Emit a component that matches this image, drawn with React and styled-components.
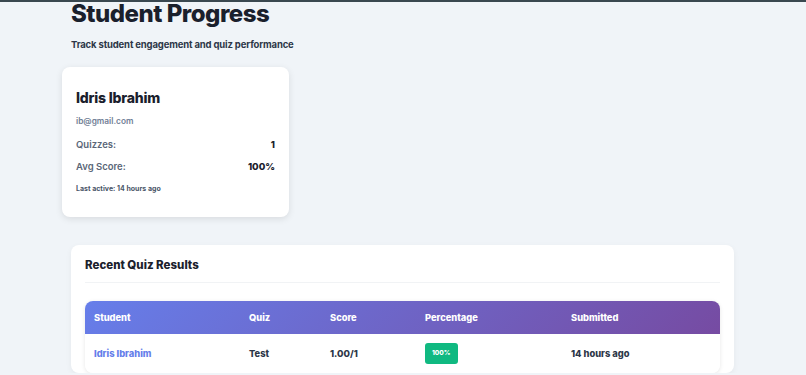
import React from "react";
import styled, { createGlobalStyle } from "styled-components";

const Global = createGlobalStyle`
  html, body { margin: 0; padding: 0; }
  body {
    background: #f0f4f8;
    font-family: Inter, "Noto Sans", "Liberation Sans", sans-serif;
    color: #1a202c;
    overflow: hidden;
  }
`;

const TopBar = styled.div`
  height: 2px;
  background: #3a4850;
`;

const Page = styled.main`
  display: flex;
  flex-direction: column;
  padding: 0 72px 0 62px;
`;

const Header = styled.header`
  padding-left: 9px;
`;

const Title = styled.h1`
  margin: 0;
  font-size: 24px;
  line-height: 1;
  font-weight: 800;
  color: #1a202c;
  letter-spacing: -0.5px;
`;

const Subtitle = styled.p`
  margin: 13px 0 0;
  font-size: 9.5px;
  line-height: 12px;
  font-weight: 700;
  color: #2d3748;
  letter-spacing: -0.15px;
`;

const Card = styled.section`
  margin-top: 16px;
  width: 227px;
  box-sizing: border-box;
  height: 150px;
  padding: 22px 14px 0;
  background: #fff;
  border-radius: 8px;
  box-shadow: 0 2px 7px rgba(0, 0, 0, 0.1);
`;

const Name = styled.h3`
  margin: 0;
  font-size: 14px;
  line-height: 18px;
  font-weight: 800;
  color: #1a202c;
  letter-spacing: -0.2px;
`;

const Email = styled.div`
  margin-top: 8px;
  font-size: 8.3px;
  line-height: 12px;
  font-weight: 600;
  color: #718096;
`;

const StatRow = styled.div`
  display: flex;
  justify-content: space-between;
  align-items: center;
  margin-top: ${(p) => p.$gap}px;
  font-size: 9.5px;
  line-height: 14px;
`;

const StatLabel = styled.span`
  font-weight: 600;
  color: #5a6678;
`;

const StatValue = styled.span`
  font-weight: 800;
  color: #1a202c;
`;

const LastActive = styled.div`
  margin-top: 10px;
  font-size: 7px;
  line-height: 10px;
  font-weight: 700;
  color: #4a5568;
`;

const Results = styled.section`
  margin: 28px 0 0 9px;
  padding: 13px 14px 0;
  background: #fff;
  border-radius: 8px;
  box-shadow: 0 2px 6px rgba(0, 0, 0, 0.05);
`;

const ResultsTitle = styled.h2`
  margin: 0;
  padding-bottom: 10px;
  font-size: 11.5px;
  line-height: 14px;
  font-weight: 800;
  color: #1a202c;
  border-bottom: 1px solid #f1f3f5;
`;

const TableWrap = styled.div`
  margin-top: 18px;
  border-radius: 8px;
  overflow: hidden;
  box-shadow: 0 1px 4px rgba(0, 0, 0, 0.1);
`;

const Table = styled.table`
  width: 100%;
  border-collapse: collapse;
  table-layout: fixed;
`;

const HeadRow = styled.tr`
  background: linear-gradient(135deg, #667eea 0%, #764ba2 100%);
`;

const Th = styled.th`
  height: 33px;
  padding: 0 9px;
  text-align: left;
  font-size: 9.3px;
  font-weight: 800;
  color: #fff;
`;

const Td = styled.td`
  height: 39px;
  padding: 0 9px;
  font-size: 9.3px;
  font-weight: 800;
  color: ${(p) => (p.$accent ? "#667eea" : "#2d3748")};
  background: #fff;
`;

const Badge = styled.span`
  display: inline-block;
  padding: 6px 7px;
  border-radius: 3px;
  background: #10b981;
  color: #fff;
  font-size: 6.5px;
  line-height: 9px;
  font-weight: 800;
`;

export default function App() {
  return (
    <>
      <Global />
      <TopBar />
      <Page>
        <Header>
          <Title>Student Progress</Title>
          <Subtitle>Track student engagement and quiz performance</Subtitle>
        </Header>
        <Card>
          <Name>Idris Ibrahim</Name>
          <Email>ib@gmail.com</Email>
          <StatRow $gap={11}>
            <StatLabel>Quizzes:</StatLabel>
            <StatValue>1</StatValue>
          </StatRow>
          <StatRow $gap={8}>
            <StatLabel>Avg Score:</StatLabel>
            <StatValue>100%</StatValue>
          </StatRow>
          <LastActive>Last active: 14 hours ago</LastActive>
        </Card>
        <Results>
          <ResultsTitle>Recent Quiz Results</ResultsTitle>
          <TableWrap>
            <Table>
              <colgroup>
                <col style={{ width: 155 }} />
                <col style={{ width: 81 }} />
                <col style={{ width: 95 }} />
                <col style={{ width: 146 }} />
                <col />
              </colgroup>
              <thead>
                <HeadRow>
                  <Th>Student</Th>
                  <Th>Quiz</Th>
                  <Th>Score</Th>
                  <Th>Percentage</Th>
                  <Th>Submitted</Th>
                </HeadRow>
              </thead>
              <tbody>
                <tr>
                  <Td $accent>Idris Ibrahim</Td>
                  <Td>Test</Td>
                  <Td>1.00/1</Td>
                  <Td>
                    <Badge>100%</Badge>
                  </Td>
                  <Td>14 hours ago</Td>
                </tr>
              </tbody>
            </Table>
          </TableWrap>
        </Results>
      </Page>
    </>
  );
}
